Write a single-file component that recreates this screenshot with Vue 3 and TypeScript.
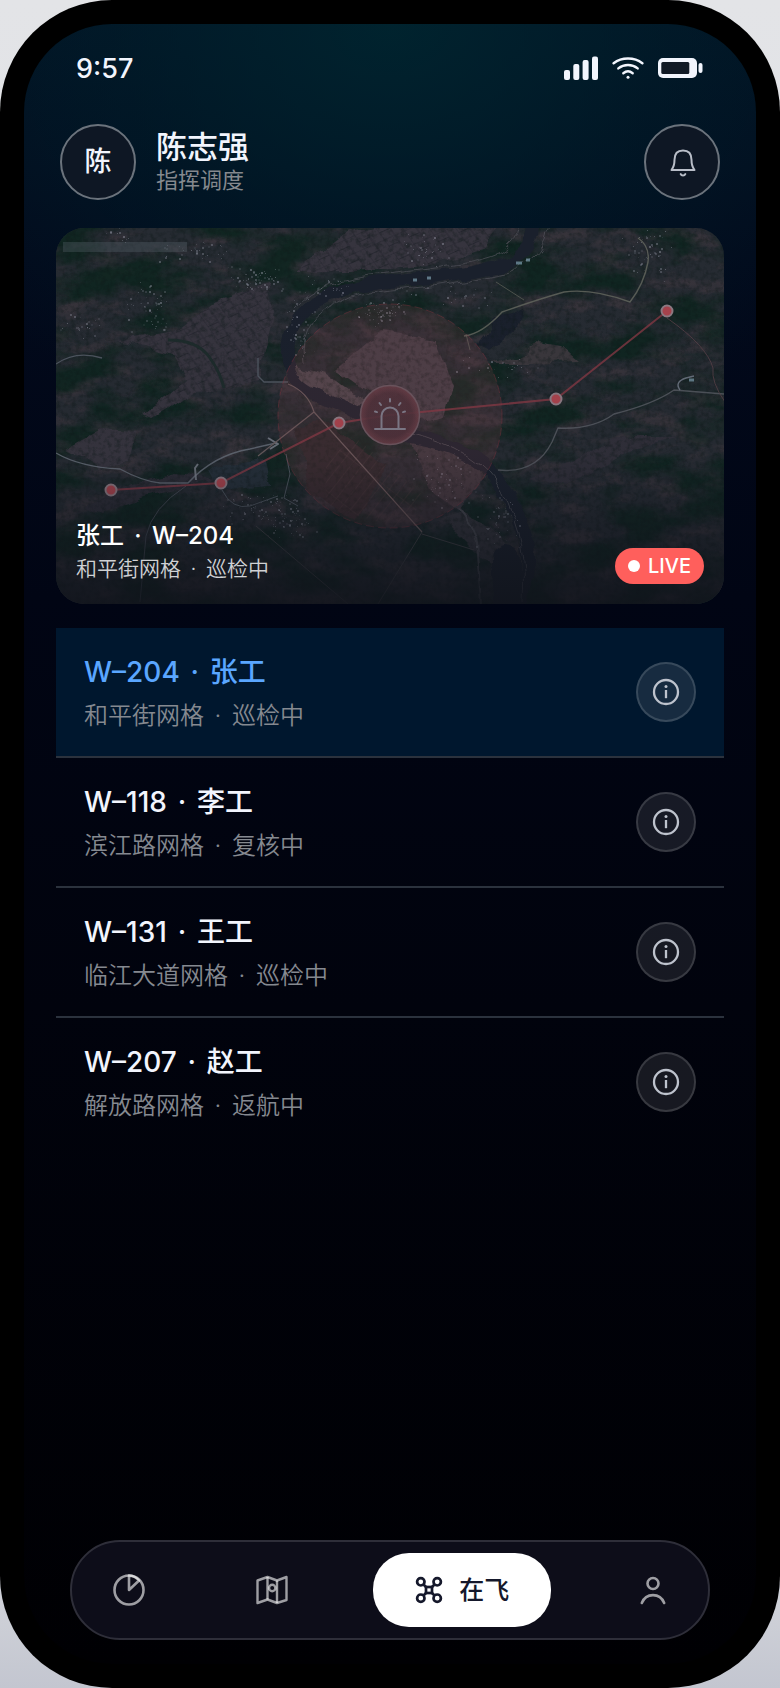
<script setup lang="ts">
import { ref } from 'vue'

interface Worker {
  code: string
  name: string
  grid: string
  state: string
}

interface Speck {
  x: number
  y: number
  r: number
  o: number
}

const workers: Worker[] = [
  { code: 'W–204', name: '张工', grid: '和平街网格', state: '巡检中' },
  { code: 'W–118', name: '李工', grid: '滨江路网格', state: '复核中' },
  { code: 'W–131', name: '王工', grid: '临江大道网格', state: '巡检中' },
  { code: 'W–207', name: '赵工', grid: '解放路网格', state: '返航中' },
]

const selected = ref(0)

const route: [number, number][] = [
  [55, 262],
  [165, 255],
  [283, 195],
  [334, 187],
  [500, 171],
  [611, 83],
]
const stops = route.filter((_, i) => i !== 3)
const routePoints = route.map((p) => p.join(',')).join(' ')

// Villages: centre x, centre y, spread x, spread y, number of houses
const villages: [number, number, number, number, number][] = [
  [200, 50, 26, 10, 60],
  [92, 80, 20, 22, 55],
  [62, 5, 14, 8, 14],
  [140, 24, 30, 10, 35],
  [325, 82, 22, 12, 60],
  [205, 280, 34, 12, 70],
  [232, 298, 24, 12, 40],
  [370, 22, 24, 14, 35],
  [592, 22, 22, 28, 50],
  [244, 100, 12, 24, 40],
  [30, 96, 22, 12, 24],
  [390, 250, 30, 24, 50],
  [440, 290, 20, 26, 50],
  [440, 140, 40, 10, 24],
  [270, 60, 40, 10, 30],
  [400, 66, 40, 12, 24],
]

let seed = 7
function rand(): number {
  seed = (seed * 16807) % 2147483647
  return seed / 2147483647
}

const specks: Speck[] = villages.flatMap(([cx, cy, sx, sy, n]) =>
  Array.from({ length: n }, () => ({
    x: Math.round(cx + (rand() + rand() - 1) * sx * 1.3),
    y: Math.round(cy + (rand() + rand() - 1) * sy * 1.3),
    r: rand() > 0.6 ? 2 : 1,
    o: 0.1 + rand() * 0.35,
  })),
)
</script>

<template>
  <div class="stage">
    <div class="phone">
      <div class="screen">
        <div class="status">
          <span class="time">9:57</span>
          <div class="signals">
            <svg width="34" height="24" viewBox="0 0 34 24" fill="#f2f5fd">
              <rect x="0" y="14" width="6" height="10" rx="2" />
              <rect x="9.3" y="8" width="6" height="16" rx="2" />
              <rect x="18.6" y="4" width="6" height="20" rx="2" />
              <rect x="28" y="0.5" width="6" height="23.5" rx="2" />
            </svg>
            <svg width="32" height="24" viewBox="0 0 32 24" fill="none" stroke="#f2f5fd" stroke-width="2.4" stroke-linecap="round">
              <path d="M1.6 7.2C9.8.9 22.2.9 30.4 7.2" />
              <path d="M6.3 12.4c5.6-4.5 13.8-4.5 19.4 0" />
              <path d="M11.3 17.2c2.8-2.2 6.6-2.2 9.4 0" />
              <circle cx="16" cy="21.2" r="1.5" fill="#f2f5fd" stroke="none" />
            </svg>
            <svg width="45" height="24" viewBox="0 0 45 24">
              <rect x="0" y="2" width="39" height="20" rx="5" fill="#f2f5fd" />
              <rect x="3.3" y="6" width="28" height="12" rx="1.5" fill="#111a26" />
              <rect x="40.5" y="7" width="4" height="10" rx="2" fill="#f2f5fd" />
            </svg>
          </div>
        </div>

        <header class="header">
          <div class="avatar">陈</div>
          <div class="who">
            <h1>陈志强</h1>
            <p>指挥调度</p>
          </div>
          <button class="bell" type="button" aria-label="通知">
            <svg width="28" height="30" viewBox="0 0 28 30" fill="none" stroke="#b9bec8" stroke-width="2" stroke-linecap="round" stroke-linejoin="round">
              <path d="M3.500 23h23c-2.300-3-3-6.200-3-10.200C23.500 6.800 20.500 3.400 15 3.400S6.500 6.800 6.500 12.800c0 4-.7 7.200-3 10.200z" />
              <path d="M12.700 27.100c.8 1.900 3.800 1.900 4.600 0" />
            </svg>
          </button>
        </header>

        <main class="content">
          <section class="live-card">
            <svg class="map" viewBox="0 0 668 376" preserveAspectRatio="xMidYMid slice" aria-hidden="true">
              <defs>
                <filter id="forest" x="0" y="0" width="100%" height="100%" color-interpolation-filters="sRGB">
                  <feTurbulence type="fractalNoise" baseFrequency="0.016 0.03" numOctaves="6" seed="11" />
                  <feColorMatrix type="matrix" values="0 0 0 0 0.06  0 0 0 0 0.145  0 0 0 0 0.125  4 0 0 0 -1.75" />
                </filter>
                <filter id="earth" x="0" y="0" width="100%" height="100%" color-interpolation-filters="sRGB">
                  <feTurbulence type="fractalNoise" baseFrequency="0.03 0.06" numOctaves="5" seed="31" />
                  <feColorMatrix type="matrix" values="0 0 0 0 0.23  0 0 0 0 0.21  0 0 0 0 0.24  0 4 0 0 -1.9" />
                </filter>
                <filter id="grain" x="0" y="0" width="100%" height="100%" color-interpolation-filters="sRGB">
                  <feTurbulence type="fractalNoise" baseFrequency="0.2" numOctaves="3" seed="5" />
                  <feColorMatrix type="matrix" values="0 0 0 0 0.06  0 0 0 0 0.1  0 0 0 0 0.1  0 3 0 0 -1.35" />
                </filter>
                <filter id="rough" x="-5%" y="-5%" width="110%" height="110%" color-interpolation-filters="sRGB">
                  <feTurbulence type="fractalNoise" baseFrequency="0.05" numOctaves="2" seed="3" result="n" />
                  <feDisplacementMap in="SourceGraphic" in2="n" scale="12" xChannelSelector="R" yChannelSelector="G" />
                </filter>
                <pattern id="plots" width="22" height="16" patternUnits="userSpaceOnUse" patternTransform="rotate(-24) skewX(12)">
                  <path d="M0 0h22M0 8h12M0 0v16M12 0v16" fill="none" stroke="#25262f" stroke-width="1" />
                </pattern>
                <pattern id="rows" width="9" height="40" patternUnits="userSpaceOnUse" patternTransform="rotate(38)">
                  <path d="M0 0v40M0 0h9" fill="none" stroke="#4a3b3d" stroke-width="1" opacity=".6" />
                </pattern>
                <linearGradient id="shade" x1="0" y1="0" x2="0" y2="1">
                  <stop offset="0" stop-color="#0f131c" stop-opacity="0" />
                  <stop offset=".6" stop-color="#0f131c" stop-opacity=".05" />
                  <stop offset="1" stop-color="#10131b" stop-opacity=".85" />
                </linearGradient>
                <radialGradient id="beacon">
                  <stop offset="0" stop-color="#50343d" />
                  <stop offset=".75" stop-color="#52323b" />
                  <stop offset="1" stop-color="#693d46" />
                </radialGradient>
              </defs>

              <rect width="668" height="376" fill="#262b32" />
              <rect width="668" height="376" filter="url(#earth)" opacity=".8" />
              <rect width="668" height="376" filter="url(#forest)" opacity=".9" />

              <g filter="url(#rough)">
                <g fill="#36343e">
                  <path d="M60 112l60-9 40-31 52-16 6 30-16 66-34 10-31 2-40 26-8-4 41-33-12-26z" />
                  <path d="M240 44l52-40 40-6h110l-12 22-60 18-70 6z" />
                  <path d="M8 222l36-20 36 2-8 30-28 6z" />
                  <path d="M28 280l30-20 60-14 46 4-60 14-60 22z" fill="#2d2d37" />
                  <path d="M150 240l60-8 6 26-54 4z" fill="#26303a" />
                  <path d="M470 250l50-16 40-26 60 2-50 14-60 34z" fill="#302f39" />
                </g>
                <path d="M280 142l45-38 54 8 18 46-8 30-26 6-22-30-18 8z" fill="#433d46" />
                <path d="M352 206l60 20 16 26-26 30-28-18z" fill="#3b373f" />
                <path d="M386 290l20-6 30 14 28 34-12 14-30-20z" fill="#35353d" />
                <path d="M434 136l34-10 14-12 22 4 18 16-50 2z" fill="#3a373c" />
                <path d="M236 136l34 10 40 30-12 4-60-30z" fill="#4c464d" />
                <path d="M240 200l26-10 64 48-30 56-46-30z" fill="#2a272b" />
                <path d="M420 118l20-26 28-12-6 18-30 26z" fill="#1a202c" />
              </g>
              <path d="M60 112l60-9 40-31 52-16 6 30-16 66-34 10-31 2-40 26-8-4 41-33-12-26z" fill="url(#plots)" opacity=".7" />
              <path d="M240 44l52-40 40-6h110l-12 22-60 18-70 6z" fill="url(#plots)" opacity=".8" />
              <path d="M270 232l30-22 70 60-26 32-74-26z" fill="url(#rows)" />
              <path d="M236 300l90-6 40 82H210z" fill="url(#plots)" opacity=".3" />

              <rect width="668" height="376" filter="url(#grain)" opacity=".38" />

              <g fill="none" stroke="#1a202c" stroke-linecap="round" stroke-linejoin="round" filter="url(#rough)">
                <path d="M478 -4q0 26-26 38-28 12-118 20-66 6-88 32-16 20-14 48 4 24 36 36 40 14 58 34" stroke-width="12" />
                <path d="M330 204q50 6 84 24 34 22 52 72 12 32-2 80" stroke-width="15" />
                <path d="M450 330v50" stroke-width="26" />
              </g>
              <g fill="none" stroke="#4c4d55" stroke-width="1" opacity=".8" filter="url(#rough)">
                <path d="M494 -4q-4 30-34 44-34 14-124 22-60 6-78 30-14 18-10 42" />
                <path d="M464 -4q-2 20-22 30-20 10-110 20-70 6-94 34" />
                <path d="M352 204q70 16 94 60 26 50 22 112" />
                <path d="M402 280q18 20 20 44l4 52" stroke-width="2" />
              </g>
              <path d="M112 112q30 0 42 18 10 14 14 30" fill="none" stroke="#1d2b2b" stroke-width="3" />

              <g>
                <rect v-for="(s, i) in specks" :key="i" :x="s.x" :y="s.y" :width="s.r" :height="s.r" fill="#9a9cab" :opacity="s.o" />
              </g>

              <g fill="none" stroke-linejoin="round">
                <path d="M0 225q24 14 64 16 22 12 40 14h28q26-28 62-34l26-6" stroke="#69707c" stroke-width="1.400" opacity=".8" />
                <path d="M212 210l10 6-8 5M140 252l-1-12 3-4" stroke="#7d828d" stroke-width="2" opacity=".8" />
                <path d="M130 258q-34 22-40 50l-6 66" stroke="#424852" stroke-width="1" />
                <path d="M166 262q10 20 28 16l28-10M230 226l4 20-6 24 14 8" stroke="#4d545e" stroke-width="1" />
                <path d="M0 136q20-14 46-6M202 130v18l6 6h24" stroke="#4d545e" stroke-width="1.400" />
                <path d="M232 156q20 8 26 28l108 120M258 184l-56 44" stroke="#665a5c" stroke-width="1.200" />
                <path d="M200 298l92 78M366 304l-44 72M366 306l52 16" stroke="#424247" stroke-width="1" />
                <path d="M408 108q18-2 38-24 34-12 62-20 28-4 66 10 14-18 18-40 2-16-10-24" stroke="#62655d" stroke-width="1.400" opacity=".85" />
                <path d="M440 54l28 18M410 106l4 16" stroke="#62655d" stroke-width="1" opacity=".7" />
                <path d="M442 242q38 4 54-28l6-14q34 2 56-14 40-10 60-24l50 4" stroke="#595c64" stroke-width="1.400" opacity=".8" />
                <path d="M611 90q40 28 46 50-2 14 12 34" stroke="#594148" stroke-width="1" opacity=".8" />
                <path d="M624 162q-6-8 6-12l8-2" stroke="#858c9b" stroke-width="1.400" opacity=".7" />
              </g>
              <path d="M460 35h6M470 32h4M357 52h4M371 50h4M633 152h5" stroke="#7e9fb0" stroke-width="3" opacity=".7" />

              <rect x="7" y="14" width="124" height="10" fill="#56606a" opacity=".35" />
              <circle cx="334" cy="188" r="112" fill="#8c4a50" fill-opacity=".18" stroke="#8e3542" stroke-opacity=".4" stroke-dasharray="8 4" />
              <polyline :points="routePoints" fill="none" stroke="#8a3a45" stroke-width="2" opacity=".75" />
              <circle v-for="p in stops" :key="p[0]" :cx="p[0]" :cy="p[1]" r="5.500" fill="#a8434d" stroke="#8d7a83" stroke-width="2" />

              <circle cx="334" cy="187" r="29.500" fill="url(#beacon)" fill-opacity=".9" stroke="#6c555e" stroke-width="1.500" />
              <g fill="none" stroke="#7f7a88" stroke-width="2" stroke-linecap="round">
                <path d="M319 201h30M325.500 200v-12a8.500 8.500 0 0 1 17 0v12" />
                <path d="M334 171v2.500M323.500 175l1.500 2M344.500 175l-1.500 2M319 183.500l2 .6M349 183.500l-2 .6" />
              </g>
              <rect width="668" height="376" fill="url(#shade)" />
            </svg>

            <div class="caption">
              <div>
                <h2>张工<i class="dot">·</i>W–204</h2>
                <p>和平街网格<i class="dot">·</i>巡检中</p>
              </div>
              <span class="live">LIVE</span>
            </div>
          </section>

          <ul class="list">
            <li v-for="(w, i) in workers" :key="w.code" :class="{ active: selected === i }" @click="selected = i">
              <div class="worker">
                <h3>{{ w.code }}<i class="dot">·</i>{{ w.name }}</h3>
                <p>{{ w.grid }}<i class="dot">·</i>{{ w.state }}</p>
              </div>
              <button class="info" type="button" :aria-label="w.name + '详情'">
                <svg width="28" height="28" viewBox="0 0 28 28" fill="none" stroke="#bec3cd" stroke-width="2.300">
                  <circle cx="14" cy="14" r="12" />
                  <path d="M14 12v8.200" />
                  <circle cx="14" cy="8.400" r="1.500" fill="#bec3cd" stroke="none" />
                </svg>
              </button>
            </li>
          </ul>
        </main>

        <nav class="tabs">
          <button type="button" aria-label="统计">
            <svg width="32" height="32" viewBox="0 0 32 32" fill="none" stroke-linejoin="round">
              <circle cx="16" cy="16" r="14.500" stroke="#fff" stroke-opacity=".6" stroke-width="2.600" />
              <path d="M16 1.500V16L26 6.500A14.500 14.500 0 0 0 16 1.500z" stroke="#fff" stroke-opacity=".6" stroke-width="2.600" />
            </svg>
          </button>
          <button type="button" aria-label="地图">
            <svg width="32" height="30" viewBox="0 0 32 30" fill="none" stroke="#fff" stroke-opacity=".6" stroke-width="2.400" stroke-linejoin="round">
              <path d="M1.500 5.500L11.500 2l9.500 3.500L30.500 2v23L21 28l-9.500-3.500L1.500 28z" />
              <path d="M11.500 2v22.500" />
              <path d="M21 5.500V28" />
              <circle cx="16.200" cy="13" r="3.200" />
            </svg>
          </button>
          <button class="current" type="button" aria-current="page">
            <svg width="28" height="28" viewBox="0 0 28 28" fill="none" stroke="#15182b" stroke-width="2.700">
              <circle cx="5.800" cy="5.800" r="3.700" />
              <circle cx="22.200" cy="5.800" r="3.700" />
              <circle cx="5.800" cy="22.200" r="3.700" />
              <circle cx="22.200" cy="22.200" r="3.700" />
              <rect x="11" y="11" width="6" height="6" />
              <path d="M8.500 8.500L11 11M19.500 8.500L17 11M8.500 19.500L11 17M19.500 19.500L17 17" />
            </svg>
            <span>在飞</span>
          </button>
          <button type="button" aria-label="我的">
            <svg width="28" height="30" viewBox="0 0 28 30" fill="none" stroke="#fff" stroke-opacity=".6" stroke-width="2.600" stroke-linecap="round">
              <circle cx="14" cy="8.500" r="5.500" />
              <path d="M2.800 28C7 17.500 21 17.500 25.200 28" />
            </svg>
          </button>
        </nav>
      </div>
    </div>
  </div>
</template>

<style>
body {
  margin: 0;
}
</style>

<style scoped>
* {
  box-sizing: border-box;
}
h1,
h2,
h3,
p,
ul {
  margin: 0;
  padding: 0;
}
button {
  padding: 0;
  font: inherit;
  color: inherit;
  cursor: pointer;
}
svg {
  display: block;
}
.stage {
  min-height: 100vh;
  display: flex;
  background: linear-gradient(180deg, #e3e4e7 0%, #dcdfe5 50%, #cfd1d8 95%, #c3c6d0 100%);
  font-family: Inter, 'Noto Sans CJK SC', sans-serif;
  color: #f2f5fd;
}
.phone {
  flex: 1;
  display: flex;
  padding: 24px;
  border-radius: 112px;
  background: #000;
}
.screen {
  flex: 1;
  min-width: 0;
  display: flex;
  flex-direction: column;
  padding-bottom: 24px;
  border-radius: 88px;
  background:
    radial-gradient(ellipse 75% 26% at 50% 0, rgba(0, 38, 48, 0.85), rgba(0, 36, 46, 0.4) 50%, transparent),
    linear-gradient(180deg, #021224 0%, #020a1c 14%, #010514 35%, #01030d 60%, #000003 100%);
}
.status {
  height: 88px;
  padding: 0 53px 0 52px;
  display: flex;
  align-items: center;
  justify-content: space-between;
}
.time {
  font-size: 27px;
  font-weight: 500;
}
.signals {
  display: flex;
  gap: 14px;
}
.header {
  display: flex;
  align-items: center;
  padding: 12px 36px 28px;
}
.avatar,
.bell {
  flex: none;
  width: 76px;
  height: 76px;
  display: grid;
  place-items: center;
  border: 2px solid #6b737c;
  border-radius: 50%;
  background: #0e1724;
}
.avatar {
  font-size: 27px;
  line-height: 32px;
  font-weight: 500;
}
.who {
  flex: 1;
  padding: 0 20px;
}
h1 {
  font-size: 31px;
  line-height: 36px;
  font-weight: 500;
}
.who p {
  font-size: 22px;
  line-height: 30px;
  color: #85898e;
}
.content {
  flex: 1;
  padding: 0 32px;
}
.live-card {
  position: relative;
  display: flex;
  align-items: flex-end;
  aspect-ratio: 668 / 376;
  border-radius: 28px;
  overflow: hidden;
}
.map {
  position: absolute;
  inset: 0;
  width: 100%;
  height: 100%;
}
.caption {
  position: relative;
  flex: 1;
  display: flex;
  align-items: flex-end;
  justify-content: space-between;
  padding: 20px;
}
h2 {
  font-size: 24px;
  line-height: 36px;
  font-weight: 500;
  color: #fff;
}
.caption p {
  font-size: 21px;
  line-height: 30px;
  font-weight: 350;
  color: #cfd1d4;
}
.dot {
  display: inline-block;
  width: 28px;
  font-style: normal;
  text-align: center;
}
.caption p .dot {
  width: 25px;
}
.live {
  height: 36px;
  display: flex;
  align-items: center;
  gap: 8px;
  padding: 0 13px;
  border-radius: 18px;
  background: #ff5f5c;
  color: #fff;
  font-size: 20px;
  font-weight: 500;
}
.live::before {
  content: '';
  width: 12px;
  height: 12px;
  border-radius: 50%;
  background: #fff;
}
.list {
  margin-top: 24px;
  list-style: none;
}
.list li {
  display: flex;
  align-items: center;
  justify-content: space-between;
  height: 130px;
  padding: 0 28px;
  border-bottom: 2px solid #2b323d;
}
.list li:last-child {
  border-bottom-color: transparent;
}
.list li.active {
  background: #00172e;
}
.worker {
  padding-top: 4px;
}
.list h3 {
  font-size: 28px;
  line-height: 44px;
  font-weight: 500;
}
.list h3 .dot {
  width: 30px;
}
.active h3 {
  color: #5aa6ff;
}
.list p {
  font-size: 24px;
  line-height: 44px;
  font-weight: 350;
  color: #858990;
}
.info {
  width: 60px;
  height: 60px;
  display: grid;
  place-items: center;
  border: 2px solid rgba(255, 255, 255, 0.14);
  border-radius: 50%;
  background: rgba(255, 255, 255, 0.09);
}
.tabs {
  height: 100px;
  margin: 0 46px;
  padding: 0 14px 0 16px;
  display: flex;
  align-items: center;
  justify-content: space-between;
  border: 2px solid #2e2e39;
  border-radius: 50px;
  background: #0d0d19;
}
.tabs button {
  width: 82px;
  height: 74px;
  display: flex;
  align-items: center;
  justify-content: center;
  gap: 16px;
  border: 0;
  border-radius: 36px;
  background: none;
}
.tabs .current {
  width: 178px;
  background: #fff;
  color: #15182b;
  font-size: 25px;
  line-height: 36px;
  font-weight: 500;
}
</style>
